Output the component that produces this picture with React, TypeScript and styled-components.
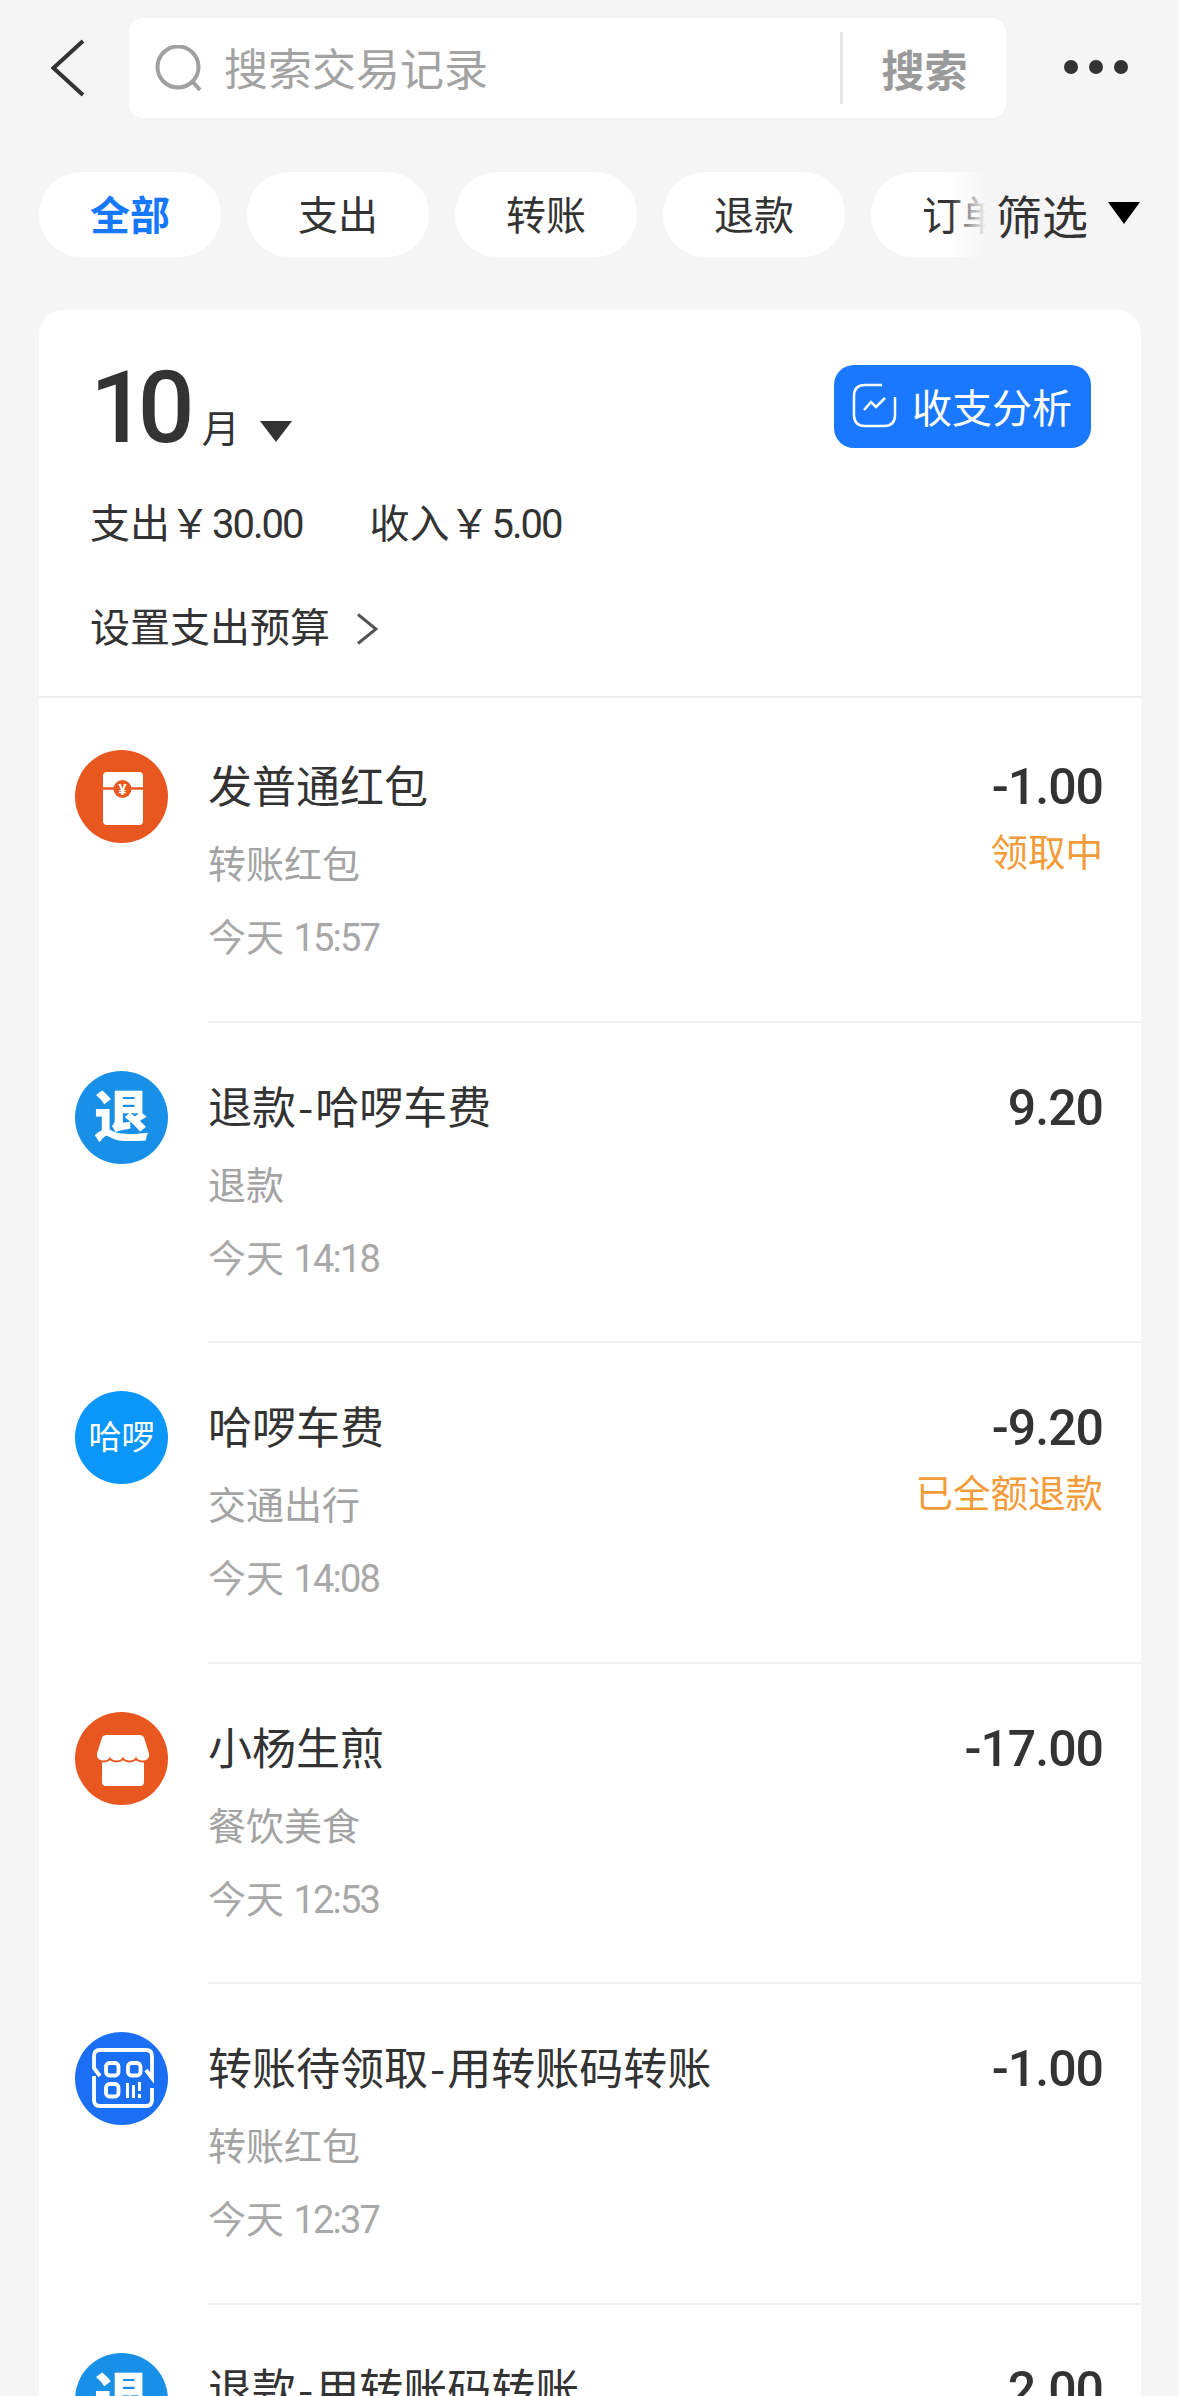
import styled, { createGlobalStyle } from "styled-components";

const GlobalStyle = createGlobalStyle`
  html, body {
    margin: 0;
    padding: 0;
    background: #f5f5f5;
  }
  body {
    width: 1179px;
    height: 2396px;
    overflow: hidden;
    font-family: Roboto, "Noto Sans CJK SC", sans-serif;
    color: #333;
  }
`;

const S = {
  Page: styled.div`
    width: 1179px;
    height: 2396px;
    overflow: hidden;
    padding-top: 18px;
    box-sizing: border-box;
  `,
  Header: styled.header`
    display: flex;
    align-items: center;
    height: 100px;
  `,
  Back: styled.div`
    width: 129px;
    display: flex;
    padding-left: 51px;
    box-sizing: border-box;
  `,
  SearchBox: styled.div`
    width: 877px;
    height: 100px;
    background: #fff;
    border-radius: 14px;
    display: flex;
    align-items: center;
    padding-left: 26px;
    box-sizing: border-box;
  `,
  Placeholder: styled.span`
    flex: 1;
    margin-left: 21px;
    margin-top: -3px;
    font-size: 44px;
    color: #a3a3a3;
  `,
  SearchDivider: styled.div`
    width: 3px;
    height: 72px;
    background: #e4e4e4;
  `,
  SearchButton: styled.span`
    width: 163px;
    text-align: center;
    font-size: 43px;
    font-weight: 700;
    color: #9a9a9a;
  `,
  More: styled.div`
    display: flex;
    gap: 11px;
    margin-left: 58px;
    margin-top: -2px;
  `,
  Dot: styled.i`
    width: 14px;
    height: 14px;
    border-radius: 50%;
    background: #333;
  `,
  FilterBar: styled.div`
    position: relative;
    margin-top: 54px;
    height: 85px;
    overflow: hidden;
    display: flex;
    gap: 26px;
    padding-left: 39px;
  `,
  Chip: styled.div<{ $active?: boolean }>`
    flex: none;
    width: 182px;
    height: 85px;
    padding-bottom: 4px;
    box-sizing: border-box;
    border-radius: 42px;
    background: #fff;
    display: flex;
    align-items: center;
    justify-content: center;
    font-size: 40px;
    font-weight: ${(p) => (p.$active ? 700 : 400)};
    color: ${(p) => (p.$active ? "#1677ff" : "#333")};
  `,
  FilterToggle: styled.div`
    position: absolute;
    top: 0;
    right: 0;
    bottom: 0;
    width: 229px;
    display: flex;
    align-items: center;
    padding-left: 46px;
    padding-bottom: 2px;
    box-sizing: border-box;
    background: linear-gradient(to right, rgba(245, 245, 245, 0), #f5f5f5 36px);
    font-size: 46px;
  `,
  FilterCaret: styled.svg`
    margin-left: 20px;
    margin-top: -2px;
  `,
  Card: styled.section`
    margin: 53px 38px 0 39px;
    background: #fff;
    border-radius: 24px 24px 0 0;
  `,
  Summary: styled.div`
    height: 388px;
    box-sizing: border-box;
    padding: 55px 50px 0 51px;
    border-bottom: 2px solid #eeeeee;
  `,
  MonthRow: styled.div`
    display: flex;
    align-items: flex-start;
    justify-content: space-between;
  `,
  Month: styled.div`
    display: flex;
    align-items: baseline;
    margin-top: -7px;
  `,
  MonthNumber: styled.span`
    font-size: 100px;
    line-height: 100px;
    font-weight: 500;
    letter-spacing: -9px;
  `,
  MonthUnit: styled.span`
    font-size: 38px;
    margin-left: 16px;
  `,
  MonthCaret: styled.svg`
    margin-left: 20px;
  `,
  AnalysisButton: styled.div`
    width: 257px;
    height: 83px;
    background: #1a78ff;
    border-radius: 20px;
    color: #fff;
    display: flex;
    align-items: center;
    padding-left: 18px;
    padding-bottom: 2px;
    box-sizing: border-box;
    font-size: 40px;
    gap: 15px;
  `,
  Totals: styled.div`
    display: flex;
    gap: 67px;
    margin-top: 37px;
    font-size: 40px;
    line-height: 60px;
  `,
  Figure: styled.span`
    letter-spacing: -2px;
    margin-left: 2px;
  `,
  BudgetLink: styled.div`
    display: flex;
    align-items: center;
    gap: 26px;
    margin-top: 44px;
    font-size: 40px;
    line-height: 60px;
  `,
  Row: styled.div<{ $first?: boolean }>`
    display: flex;
    height: ${(p) => (p.$first ? "324.5px" : "320.5px")};
  `,
  IconSlot: styled.div<{ $first?: boolean }>`
    width: 169px;
    padding: ${(p) => (p.$first ? "52px" : "48px")} 0 0 36px;
    box-sizing: border-box;
  `,
  RoundIcon: styled.div<{ $color: string }>`
    width: 93px;
    height: 93px;
    border-radius: 50%;
    background: ${(p) => p.$color};
    color: #fff;
    display: flex;
    align-items: center;
    justify-content: center;
  `,
  RefundGlyph: styled.span`
    font-size: 55px;
    font-weight: 900;
    line-height: 1;
  `,
  HelloGlyph: styled.span`
    font-size: 33px;
    line-height: 1;
  `,
  RowBody: styled.div<{ $first?: boolean; $last?: boolean }>`
    flex: 1;
    display: flex;
    justify-content: space-between;
    padding: ${(p) => (p.$first ? "52px" : "48px")} 38px 0 0;
    box-sizing: border-box;
    border-bottom: ${(p) => (p.$last ? "none" : "2px solid #f0f0f0")};
  `,
  RowText: styled.div`
    display: flex;
    flex-direction: column;
  `,
  Title: styled.div`
    font-size: 44px;
    line-height: 70px;
    margin-top: -1px;
    font-family: "Noto Sans CJK SC", sans-serif;
  `,
  Dash: styled.span`
    margin: 0 2px;
  `,
  Category: styled.div`
    font-size: 38px;
    line-height: 74px;
    margin-top: 9px;
    color: #a3a3a3;
  `,
  Time: styled.div`
    font-size: 38px;
    line-height: 74px;
    margin-top: -1px;
    color: #a8a8a8;
  `,
  Clock: styled.span`
    letter-spacing: -1.8px;
  `,
  RowAmount: styled.div`
    display: flex;
    flex-direction: column;
    align-items: flex-end;
    margin-top: 2px;
  `,
  Amount: styled.div`
    font-size: 50px;
    line-height: 70px;
    font-weight: 500;
    letter-spacing: -1px;
  `,
  Status: styled.div`
    font-size: 37.5px;
    line-height: 60px;
    margin-top: 1px;
    color: #f29b38;
  `,
};

const RedPacketIcon = () => (
  <svg width="93" height="93" viewBox="0 0 93 93">
    <rect x="28" y="22" width="40" height="53" rx="4" fill="#fff" />
    <path d="M28 38.500h40" stroke="#e8571f" strokeWidth="2.500" />
    <circle cx="47.500" cy="39" r="9" fill="#e8571f" />
    <text x="47.500" y="44.500" fontSize="15" fontWeight="700" textAnchor="middle" fill="#fff">
      ¥
    </text>
  </svg>
);

const StoreIcon = () => (
  <svg width="93" height="93" viewBox="0 0 93 93">
    <rect x="27" y="44" width="42" height="30" rx="4" fill="#fff" />
    <path
      d="M31 23h34q3 0 4 2.500l5 16v2.500a6.500 4.500 0 0 1-13 0 6.500 4.500 0 0 1-13 0 6.500 4.500 0 0 1-13 0 6.500 4.500 0 0 1-13 0v-2.500l5-16q1-2.500 4-2.500z"
      fill="#fff"
      stroke="#e8571f"
      strokeWidth="4"
      paintOrder="stroke"
    />
  </svg>
);

const TransferCodeIcon = () => (
  <svg width="93" height="93" viewBox="0 0 93 93" fill="none" stroke="#fff">
    <path
      d="M25 44l-6-8V24q0-6 6-6h46q6 0 6 6v22l-6-8M19 44v24q0 6 6 6h46q6 0 6-6V56"
      strokeWidth="3.800"
    />
    <rect x="31" y="31" width="12.500" height="12.500" rx="3.500" strokeWidth="3.800" />
    <rect x="53" y="31" width="12.500" height="12.500" rx="3.500" strokeWidth="3.800" />
    <rect x="31" y="52" width="12.500" height="12.500" rx="3.500" strokeWidth="3.800" />
    <path d="M52.500 51v15M58.500 53v13M64.500 50v9M64.500 62v4" strokeWidth="3" />
  </svg>
);

const rows = [
  {
    icon: <S.RoundIcon $color="#e8571f"><RedPacketIcon /></S.RoundIcon>,
    title: "发普通红包",
    category: "转账红包",
    time: "15:57",
    amount: "-1.00",
    status: "领取中",
  },
  {
    icon: <S.RoundIcon $color="#1890e8"><S.RefundGlyph>退</S.RefundGlyph></S.RoundIcon>,
    title: "退款-哈啰车费",
    category: "退款",
    time: "14:18",
    amount: "9.20",
  },
  {
    icon: <S.RoundIcon $color="#0b96fa"><S.HelloGlyph>哈啰</S.HelloGlyph></S.RoundIcon>,
    title: "哈啰车费",
    category: "交通出行",
    time: "14:08",
    amount: "-9.20",
    status: "已全额退款",
  },
  {
    icon: <S.RoundIcon $color="#e8571f"><StoreIcon /></S.RoundIcon>,
    title: "小杨生煎",
    category: "餐饮美食",
    time: "12:53",
    amount: "-17.00",
  },
  {
    icon: <S.RoundIcon $color="#1a6ff5"><TransferCodeIcon /></S.RoundIcon>,
    title: "转账待领取-用转账码转账",
    category: "转账红包",
    time: "12:37",
    amount: "-1.00",
  },
  {
    icon: <S.RoundIcon $color="#1890e8"><S.RefundGlyph>退</S.RefundGlyph></S.RoundIcon>,
    title: "退款-用转账码转账",
    amount: "2.00",
  },
];

// the hyphen in a title sits a little wider than the font sets it
const renderTitle = (title: string) => {
  const [head, tail] = title.split("-");
  if (tail === undefined) return head;
  return (
    <>
      {head}
      <S.Dash>-</S.Dash>
      {tail}
    </>
  );
};

export default function App() {
  return (
    <>
      <GlobalStyle />
      <S.Page>
        <S.Header>
          <S.Back>
            <svg width="34" height="58" viewBox="0 0 34 58" fill="none">
              <path d="M32 2 2.500 29 32 56" stroke="#333" strokeWidth="4" />
            </svg>
          </S.Back>
          <S.SearchBox>
            <svg width="48" height="46" viewBox="0 0 48 46" fill="none" stroke="#a0a0a0" strokeWidth="4">
              <circle cx="23" cy="22" r="20.500" />
              <path d="M37 36l8 9" />
            </svg>
            <S.Placeholder>搜索交易记录</S.Placeholder>
            <S.SearchDivider />
            <S.SearchButton>搜索</S.SearchButton>
          </S.SearchBox>
          <S.More>
            <S.Dot />
            <S.Dot />
            <S.Dot />
          </S.More>
        </S.Header>

        <S.FilterBar>
          <S.Chip $active>全部</S.Chip>
          <S.Chip>支出</S.Chip>
          <S.Chip>转账</S.Chip>
          <S.Chip>退款</S.Chip>
          <S.Chip>订单</S.Chip>
          <S.FilterToggle>
            筛选
            <S.FilterCaret width="32" height="22" viewBox="0 0 32 22">
              <path d="M0 0h32L16 22z" fill="#000" />
            </S.FilterCaret>
          </S.FilterToggle>
        </S.FilterBar>

        <S.Card>
          <S.Summary>
            <S.MonthRow>
              <S.Month>
                <S.MonthNumber>10</S.MonthNumber>
                <S.MonthUnit>月</S.MonthUnit>
                <S.MonthCaret width="32" height="21" viewBox="0 0 32 21">
                  <path d="M0 0h32L16 21z" fill="#333" />
                </S.MonthCaret>
              </S.Month>
              <S.AnalysisButton>
                <svg width="45" height="45" viewBox="0 0 45 45" fill="none" stroke="#fff" strokeWidth="2.500">
                  <path d="M30 2H13Q2 2 2 13v19q0 11 11 11h19q11 0 11-11V14" />
                  <path d="M12 27l7-8 5 5 9-9" />
                </svg>
                收支分析
              </S.AnalysisButton>
            </S.MonthRow>
            <S.Totals>
              <span>
                支出￥<S.Figure>30.00</S.Figure>
              </span>
              <span>
                收入￥<S.Figure>5.00</S.Figure>
              </span>
            </S.Totals>
            <S.BudgetLink>
              设置支出预算
              <svg width="22" height="32" viewBox="0 0 22 32" fill="none">
                <path d="M2 1.500 20 16 2 30.500" stroke="#555" strokeWidth="3" />
              </svg>
            </S.BudgetLink>
          </S.Summary>

          {rows.map((row, i) => (
            <S.Row key={i} $first={i === 0}>
              <S.IconSlot $first={i === 0}>{row.icon}</S.IconSlot>
              <S.RowBody $first={i === 0} $last={i === rows.length - 1}>
                <S.RowText>
                  <S.Title>{renderTitle(row.title)}</S.Title>
                  {row.category && <S.Category>{row.category}</S.Category>}
                  {row.time && (
                    <S.Time>
                      今天 <S.Clock>{row.time}</S.Clock>
                    </S.Time>
                  )}
                </S.RowText>
                <S.RowAmount>
                  <S.Amount>{row.amount}</S.Amount>
                  {row.status && <S.Status>{row.status}</S.Status>}
                </S.RowAmount>
              </S.RowBody>
            </S.Row>
          ))}
        </S.Card>
      </S.Page>
    </>
  );
}
